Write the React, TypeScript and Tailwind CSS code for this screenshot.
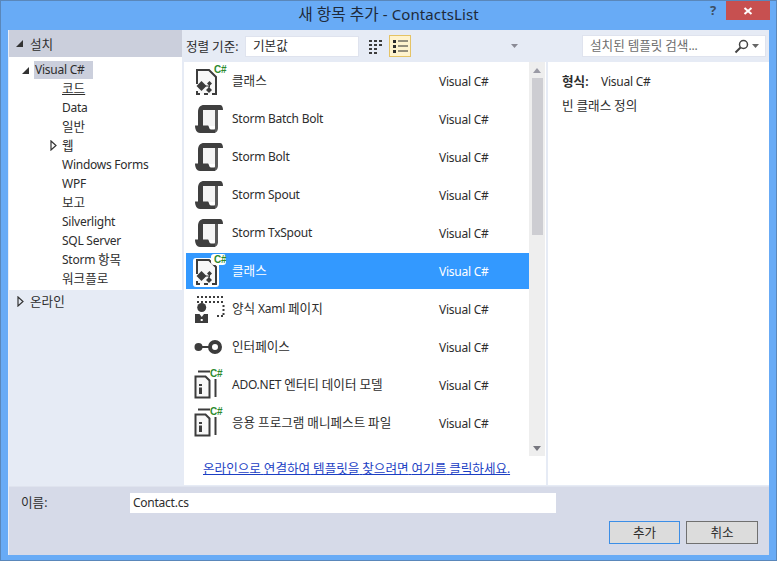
import React from "react";

const FONT = "[font-family:'Noto_Sans','Noto_Sans_CJK_KR',sans-serif]";

/* Hangul in the picture runs slightly wider than the Latin next to it */
function T({ s }: { s: string }) {
  const parts = s.split(/([\uAC00-\uD7A3]+)/);
  return (
    <>
      {parts.map((p, i) =>
        /[\uAC00-\uD7A3]/.test(p) ? (
          <span key={i} className="text-[1.05em] tracking-normal">
            {p}
          </span>
        ) : (
          <React.Fragment key={i}>{p}</React.Fragment>
        )
      )}
    </>
  );
}

function Tri({ open, className = "" }: { open?: boolean; className?: string }) {
  return open ? (
    <svg width="9" height="9" viewBox="0 0 9 9" className={className}>
      <path d="M8 1V8H1Z" fill="#333" />
    </svg>
  ) : (
    <svg width="7" height="11" viewBox="0 0 7 11" className={className}>
      <path d="M1 1L6 5.5L1 10Z" fill="none" stroke="#333" strokeWidth="1.2" />
    </svg>
  );
}

function CSharp({ selected, x = 20, y = 8 }: { selected?: boolean; x?: number; y?: number }) {
  return (
    <>
      {selected && <rect x="17" y="-1" width="15" height="11" rx="3" fill="#fff" />}
      <text x={x} y={y} fontSize="10" fontWeight="700" fill="#2e8b2e" fontFamily="'Liberation Sans',sans-serif">
        C#
      </text>
    </>
  );
}

function ClassIcon({ selected }: { selected?: boolean }) {
  return (
    <svg width="32" height="32" viewBox="0 0 32 32" className="overflow-visible">
      {selected && <rect x="-1" y="3" width="26" height="29" rx="3" fill="#fff" />}
      <path d="M4 5H15L22 12V29H4Z" fill="#f7f7f7" />
      <path d="M3 19V5H15L22 12V29H18M3 26V29H6" fill="none" stroke="#3c3c3c" strokeWidth="2" />
      <path d="M10 29H14" stroke="#3c3c3c" strokeWidth="2" />
      <path d="M2.500 21L7.500 16L12.500 21L7.500 26Z" fill="#3c3c3c" />
      <path d="M12 25L15 22L18 25L15 28Z" fill="#3c3c3c" />
      <path d="M13 18.500L15.500 16L18 18.500L15.500 21Z" fill="#3c3c3c" />
      <path d="M9 21H15V25M15.500 20V22" fill="none" stroke="#3c3c3c" strokeWidth="1" />
      <CSharp selected={selected} />
    </svg>
  );
}

function StormIcon() {
  return (
    <svg width="32" height="32" viewBox="0 0 32 32">
      <path d="M9 7H21V23H9Z" fill="#f4f4f4" />
      <path d="M4 23V9C4 4.500 6.500 2 10 2H26C28 2 29 4 29 7H9V23Z" fill="#3f3f3f" />
      <path d="M21 7H24V25C24 27.500 22.500 30 20 30V27C20.500 27 21 26.500 21 25Z" fill="#5a5a5a" />
      <path d="M1 22.500H14C15 22.500 15 26.500 17 26.500H21V30H6C3 30 1 27 1 22.500Z" fill="#3f3f3f" />
    </svg>
  );
}

function FormIcon() {
  return (
    <svg width="32" height="32" viewBox="0 0 32 32">
      <path d="M3 4H31M3 9H31M29.500 12V23M23 23H31" fill="none" stroke="#3c3c3c" strokeWidth="2" strokeDasharray="2 2" />
      <circle cx="7.700" cy="14.500" r="4.500" fill="#3c3c3c" />
      <path d="M1 21H14V30H1Z" fill="#3c3c3c" />
      <path d="M5.500 21H10L7.750 24Z" fill="#fff" />
      <path d="M6.700 26H8.700V28H6.700Z" fill="#fff" />
    </svg>
  );
}

function InterfaceIcon() {
  return (
    <svg width="32" height="32" viewBox="0 0 32 32">
      <circle cx="4.500" cy="16" r="4" fill="#3c3c3c" />
      <path d="M8 16H15" stroke="#3c3c3c" strokeWidth="2" />
      <circle cx="21" cy="16" r="5" fill="none" stroke="#3c3c3c" strokeWidth="4" />
    </svg>
  );
}

function InfoIcon() {
  return (
    <svg width="32" height="32" viewBox="0 0 32 32">
      <path d="M4 2.500H16" stroke="#3c3c3c" strokeWidth="2" />
      <path d="M1.500 7.500V28.500H15.500V11.500L11.500 7.500Z" fill="#f7f7f7" stroke="#3c3c3c" strokeWidth="2" />
      <path d="M21.500 10V28" stroke="#3c3c3c" strokeWidth="2" />
      <path d="M5 15H8V17H5ZM5 18.500H8V25H5Z" fill="#3c3c3c" />
      <CSharp x={16} y={8} />
    </svg>
  );
}

const treeRows: { label: string; arrow?: boolean; underline?: boolean }[] = [
  { label: "코드", underline: true },
  { label: "Data" },
  { label: "일반" },
  { label: "웹", arrow: true },
  { label: "Windows Forms" },
  { label: "WPF" },
  { label: "보고" },
  { label: "Silverlight" },
  { label: "SQL Server" },
  { label: "Storm 항목" },
  { label: "워크플로" },
];

const items: { label: string; icon: React.ReactNode; selected?: boolean }[] = [
  { label: "클래스", icon: <ClassIcon /> },
  { label: "Storm Batch Bolt", icon: <StormIcon /> },
  { label: "Storm Bolt", icon: <StormIcon /> },
  { label: "Storm Spout", icon: <StormIcon /> },
  { label: "Storm TxSpout", icon: <StormIcon /> },
  { label: "클래스", icon: <ClassIcon selected />, selected: true },
  { label: "양식 Xaml 페이지", icon: <FormIcon /> },
  { label: "인터페이스", icon: <InterfaceIcon /> },
  { label: "ADO.NET 엔터티 데이터 모델", icon: <InfoIcon /> },
  { label: "응용 프로그램 매니페스트 파일", icon: <InfoIcon /> },
];

export default function App() {
  return (
    <div className={`${FONT} w-[777px] h-[561px] flex flex-col bg-[#68abf6] border border-[#5a87ba] text-[12px] tracking-[-0.25px] text-[#2d2d2d] leading-[16px] overflow-hidden`}>
      {/* title bar */}
      <div className="h-[29px] shrink-0 flex items-start">
        <div className="w-[120px]" />
        <div className="flex-1 h-[25px] flex items-center justify-center text-[15px] text-[#1e2a3a]">
          <span className="whitespace-nowrap tracking-[0.1px]">
            <T s="새 항목 추가 - ContactsList" />
          </span>
        </div>
        <div className="w-[120px] flex justify-end pr-[6px]">
          <span className="mr-[10px] mt-[1px] text-[13px] font-bold text-[#3d4f63]">?</span>
          <div className="w-[44px] h-[19px] bg-[#c75050] flex items-center justify-center">
            <svg width="10" height="10" viewBox="0 0 10 10">
              <path d="M1.500 2L8.500 8M8.500 2L1.500 8" stroke="#fff" strokeWidth="2" />
            </svg>
          </div>
        </div>
      </div>

      {/* client area */}
      <div className="mx-[7px] h-[525px] flex flex-col bg-[#e6ebf5] border-l border-[#e8eef8]">
        <div className="flex flex-1 min-h-0">
          {/* left panel */}
          <div className="w-[173px] shrink-0 flex flex-col">
            <div className="h-[27px] bg-[#cbcfdc] flex items-center pl-[6px] shrink-0">
              <Tri open className="mr-[6px]" />
              <span className="mt-[2px]">
                <T s="설치" />
              </span>
            </div>
            <div className="h-[233px] bg-white pt-[4px] shrink-0">
              <div className="h-[18px] flex items-center pl-[12px]">
                <Tri open className="mr-[4px]" />
                <span className="bg-[#cbcfdc] w-[59px] h-[18px] leading-[18px] pl-[1px]">Visual C#</span>
              </div>
              {treeRows.map((r) => (
                <div key={r.label} className="h-[19px] flex items-center pl-[53px] relative">
                  {r.arrow && <Tri className="absolute left-[41px] top-[4px]" />}
                  <span className={r.underline ? "underline" : ""}>
                    <T s={r.label} />
                  </span>
                </div>
              ))}
            </div>
            <div className="h-[22px] flex items-center pl-[8px]">
              <Tri className="mr-[6px]" />
              <span className="mt-[2px]">
                <T s="온라인" />
              </span>
            </div>
          </div>

          {/* centre + right */}
          <div className="flex-1 min-w-0 flex flex-col pl-[2px]">
            {/* toolbar */}
            <div className="h-[32px] shrink-0 flex items-center">
              <span className="ml-[2px] w-[59px] mt-[1px] whitespace-nowrap">
                <T s="정렬 기준:" />
              </span>
              <div className="w-[114px] h-[21px] bg-white border border-[#dfe3ee] flex items-center pl-[7px]">
                <T s="기본값" />
              </div>
              <div className="ml-[9px] w-[15px] h-[15px]">
                <svg width="15" height="15" viewBox="0 0 15 15">
                  <path d="M1 1H4V3H1ZM6 1H9V3H6ZM11 1H14V3H11ZM1 5H4V7H1ZM6 5H9V7H6ZM11 5H14V7H11ZM1 9H4V11H1ZM6 9H9V11H6ZM1 13H4V15H1ZM6 13H9V15H6Z" fill="#3c3c3c" />
                </svg>
              </div>
              <div className="ml-[6px] w-[22px] h-[22px] bg-[#fff3cd] border border-[#e5c365] flex items-center justify-center">
                <svg width="16" height="14" viewBox="0 0 16 14">
                  <path d="M1 1H4V4H1ZM1 6H4V9H1ZM1 11H4V14H1Z" fill="#2d2d2d" />
                  <path d="M6 2H16M6 7H16M6 12H16" stroke="#2d2d2d" strokeWidth="1" />
                </svg>
              </div>
              <div className="ml-[100px] w-[7px] h-[4px]">
                <svg width="7" height="4" viewBox="0 0 7 4" className="block">
                  <path d="M0 0H7L3.500 4Z" fill="#8a8a95" />
                </svg>
              </div>
              <div className="ml-[64px] w-[184px] h-[22px] bg-white border border-[#dfe3ee] flex items-center pl-[7px] pr-[4px] text-[#6d6d6d]">
                <span className="flex-1 whitespace-nowrap">
                  <T s="설치된 템플릿 검색..." />
                </span>
                <svg width="15" height="15" viewBox="0 0 15 15">
                  <circle cx="9.500" cy="5.500" r="4" fill="none" stroke="#444" strokeWidth="1.500" />
                  <path d="M6.500 8.500L1.500 13.500" stroke="#444" strokeWidth="2" />
                </svg>
                <svg width="7" height="4" viewBox="0 0 7 4" className="ml-[3px] mr-[2px]">
                  <path d="M0 0H7L3.500 4Z" fill="#666" />
                </svg>
              </div>
            </div>

            <div className="flex flex-1 min-h-0 mb-[1px]">
              {/* template list */}
              <div className="w-[362px] shrink-0 bg-white flex flex-col pl-[2px] pr-[1px]">
                <div className="flex flex-1 min-h-0">
                  <div className="flex-1 min-w-0 pt-[1px]">
                    {items.map((it, i) => (
                      <div
                        key={i}
                        className={`h-[36px] mb-[2px] flex items-center pl-[8px] ${it.selected ? "bg-[#3399ff] text-white" : ""}`}
                      >
                        <div className="w-[32px] h-[32px] shrink-0">{it.icon}</div>
                        <span className="ml-[6px] w-[207px] -mt-[1px] whitespace-nowrap">
                          <T s={it.label} />
                        </span>
                        <span className="whitespace-nowrap mt-[2px]">Visual C#</span>
                      </div>
                    ))}
                  </div>
                  {/* scrollbar */}
                  <div className="w-[16px] shrink-0 h-[394px] bg-[#eeeeee] flex flex-col items-center">
                    <svg width="8" height="5" viewBox="0 0 8 5" className="mt-[6px]">
                      <path d="M0 5H8L4 0Z" fill="#9a9aa5" />
                    </svg>
                    <div className="mt-[5px] w-[11px] h-[157px] bg-[#cdcdd2]" />
                    <div className="flex-1" />
                    <svg width="8" height="5" viewBox="0 0 8 5" className="mb-[5px]">
                      <path d="M0 0H8L4 5Z" fill="#77777f" />
                    </svg>
                  </div>
                </div>
                <div className="h-[30px] shrink-0 pl-[17px] pt-[6px]">
                  <span className="text-[#1c3fc4] underline whitespace-nowrap">
                    <T s="온라인으로 연결하여 템플릿을 찾으려면 여기를 클릭하세요." />
                  </span>
                </div>
              </div>
              {/* details */}
              <div className="ml-[2px] flex-1 bg-white pl-[14px] pt-[12px]">
                <div className="flex">
                  <span className="w-[39px] font-semibold">
                    <T s="형식:" />
                  </span>
                  <span>Visual C#</span>
                </div>
                <div className="mt-[8px]">
                  <T s="빈 클래스 정의" />
                </div>
              </div>
            </div>
          </div>
        </div>

        {/* bottom bar */}
        <div className="h-[69px] shrink-0 bg-[#d6dae8] flex flex-col border-t border-[#dfe3ee]">
          <div className="flex items-center mt-[6px] h-[20px]">
            <span className="ml-[12px] w-[109px]">
              <T s="이름:" />
            </span>
            <div className="w-[426px] h-[20px] bg-white pl-[3px] leading-[20px]">Contact.cs</div>
          </div>
          <div className="flex justify-end mt-[8px] pr-[11px] gap-[6px]">
            <div className="w-[71px] h-[23px] bg-[#dcdcdc] border border-[#3c8ee6] flex items-center justify-center">
              <T s="추가" />
            </div>
            <div className="w-[72px] h-[23px] bg-[#dcdcdc] border border-[#707070] flex items-center justify-center">
              <T s="취소" />
            </div>
          </div>
        </div>
      </div>
    </div>
  );
}
